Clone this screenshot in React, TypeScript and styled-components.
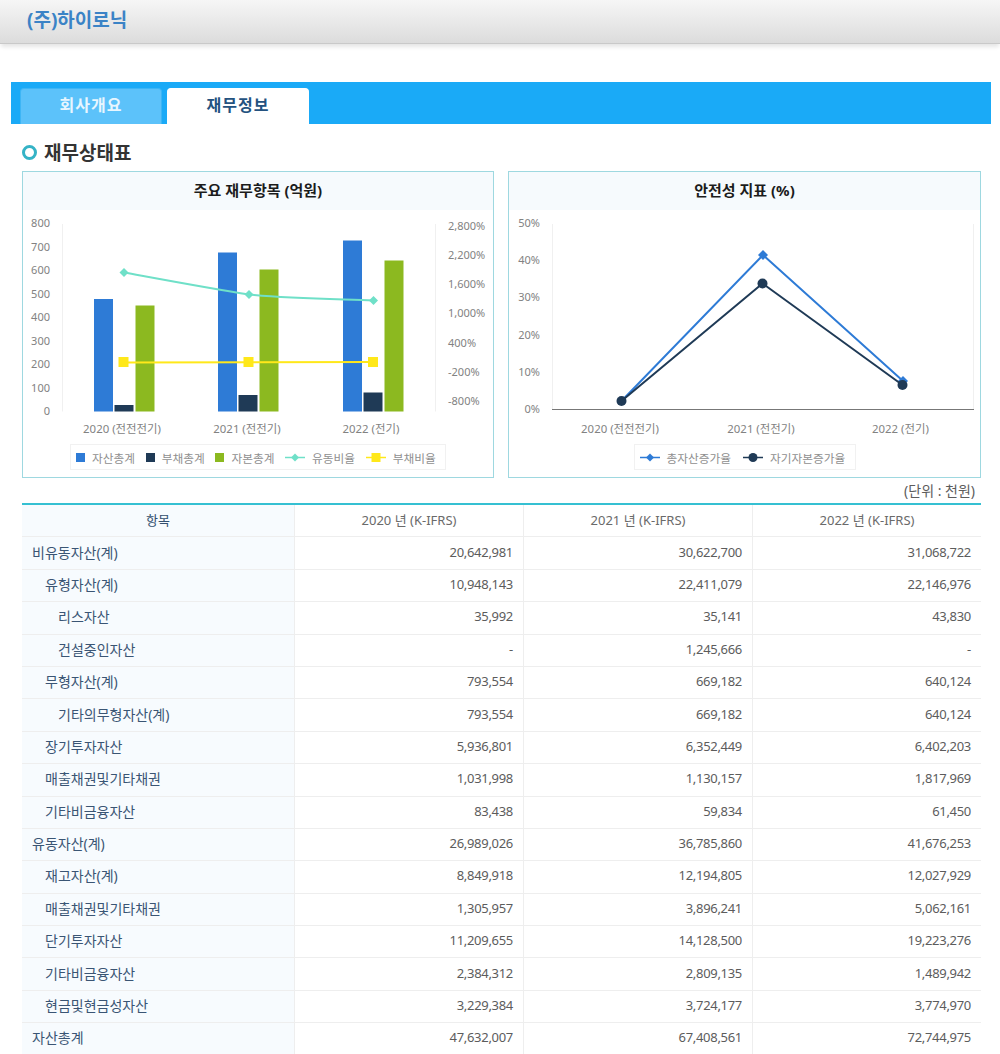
import React from 'react'
import styled, { createGlobalStyle } from 'styled-components'

const GlobalStyle = createGlobalStyle`
  html, body {
    margin: 0;
    padding: 0;
    background: #fff;
    font-family: "Noto Sans", "Noto Sans CJK KR", sans-serif;
  }
  * { box-sizing: border-box; }
`

const TopBar = styled.header`
  height: 44px;
  padding: 8px 0 0 27px;
  background: linear-gradient(#f6f6f6, #dcdcdc);
  border-bottom: 1px solid #c9c9c9;
  box-shadow: 0 4px 4px -1px #e6e6e6;
`

const Company = styled.h1`
  margin: 0;
  font-size: 19px;
  line-height: 24px;
  font-weight: 700;
  color: #3b83c6;
`

const TabBar = styled.nav`
  display: flex;
  gap: 5px;
  height: 42px;
  margin: 38px 9px 0 11px;
  padding: 6px 0 0 9px;
  background: #1aaaf7;
`

const Tab = styled.div<{ $active?: boolean }>`
  width: 142px;
  height: 36px;
  border-radius: 4px 4px 0 0;
  text-align: center;
  font-size: 16px;
  line-height: 32px;
  font-weight: 700;
  letter-spacing: 1px;
  color: ${(p) => (p.$active ? '#24527f' : '#e8f6ff')};
  background: ${(p) => (p.$active ? '#fff' : '#5cc2fa')};
  border: 1px solid ${(p) => (p.$active ? '#fff' : '#3db5f5')};
  border-bottom: 0;
`

const Content = styled.main`
  padding: 0 19px 0 22px;
`

const SectionTitle = styled.h2`
  display: flex;
  align-items: center;
  gap: 7px;
  height: 47px;
  margin: 0;
  padding-top: 9px;
  font-size: 19px;
  font-weight: 700;
  color: #333;
`

const Ring = styled.span`
  width: 15px;
  height: 15px;
  border: 3px solid #35b3c6;
  border-radius: 50%;
`

const Charts = styled.div`
  display: grid;
  grid-template-columns: 472px 473px;
  gap: 14px;
`

const Card = styled.section`
  height: 307px;
  border: 1px solid #9ed8e0;
`

const CardTitle = styled.h3`
  height: 38px;
  margin: 0;
  background: #f6fafd;
  text-align: center;
  font-size: 15px;
  line-height: 37px;
  font-weight: 700;
  color: #1c1c1c;
`

const Plot = styled.svg`
  display: block;
  width: 100%;
  height: 234px;
  font-family: "Noto Sans", "Noto Sans CJK KR", sans-serif;
  font-size: 11px;
  fill: #828282;
`

const AxisLabel = styled.text`
  font-size: 11.4px;
`

const Legend = styled.div<{ $width: number }>`
  display: flex;
  align-items: center;
  width: ${(p) => p.$width}px;
  height: 26px;
  margin: 0 auto;
  padding: 0 5px;
  border: 1px solid #f1f1f1;
`

const LegendItem = styled.span<{ $gap: number }>`
  display: flex;
  align-items: center;
  gap: 7px;
  margin-right: ${(p) => p.$gap}px;
  font-size: 11.7px;
  color: #8f8f8f;
`

const Unit = styled.div`
  height: 25px;
  padding: 3px 6px 0 0;
  text-align: right;
  font-size: 14px;
  line-height: 20px;
  color: #5c5c5c;
`

const Table = styled.table`
  width: 100%;
  border-collapse: separate;
  border-spacing: 0;
  table-layout: fixed;
  border-top: 2px solid #35c0d2;
  font-size: 13px;
`

const HeadCell = styled.th<{ $label?: boolean }>`
  height: 32.4px;
  padding: 0 0 3px;
  font-weight: 400;
  color: ${(p) => (p.$label ? '#33506f' : '#6a6a6a')};
  background: ${(p) => (p.$label ? '#f7fbfe' : '#fff')};
  border-bottom: 1px solid #eee;
  border-left: 1px solid #eee;
  &:first-child { border-left: 0; }
`

const LabelCell = styled.td<{ $level: number }>`
  height: 32.4px;
  padding: 0 0 3px ${(p) => 10 + p.$level * 13}px;
  font-size: 14px;
  color: #3a5574;
  background: #f7fbfe;
  border-bottom: 1px solid #eee;
`

const NumCell = styled.td`
  height: 32.4px;
  padding: 0 10px 3px 0;
  text-align: right;
  letter-spacing: -0.3px;
  color: #5c5c5c;
  border-bottom: 1px solid #eee;
  border-left: 1px solid #eee;
`

const rows: [number, string, string, string, string][] = [
  [0, '비유동자산(계)', '20,642,981', '30,622,700', '31,068,722'],
  [1, '유형자산(계)', '10,948,143', '22,411,079', '22,146,976'],
  [2, '리스자산', '35,992', '35,141', '43,830'],
  [2, '건설중인자산', '-', '1,245,666', '-'],
  [1, '무형자산(계)', '793,554', '669,182', '640,124'],
  [2, '기타의무형자산(계)', '793,554', '669,182', '640,124'],
  [1, '장기투자자산', '5,936,801', '6,352,449', '6,402,203'],
  [1, '매출채권및기타채권', '1,031,998', '1,130,157', '1,817,969'],
  [1, '기타비금융자산', '83,438', '59,834', '61,450'],
  [0, '유동자산(계)', '26,989,026', '36,785,860', '41,676,253'],
  [1, '재고자산(계)', '8,849,918', '12,194,805', '12,027,929'],
  [1, '매출채권및기타채권', '1,305,957', '3,896,241', '5,062,161'],
  [1, '단기투자자산', '11,209,655', '14,128,500', '19,223,276'],
  [1, '기타비금융자산', '2,384,312', '2,809,135', '1,489,942'],
  [1, '현금및현금성자산', '3,229,384', '3,724,177', '3,774,970'],
  [0, '자산총계', '47,632,007', '67,408,561', '72,744,975'],
]

// chart coordinates are relative to the plot svg
const BLUE = '#2e7bd6'
const NAVY = '#1f3a56'
const GREEN = '#8cb920'
const MINT = '#6fe0c8'
const YELLOW = '#ffe81a'
const BASE = 201.5

const bars = [
  { x: 71, tops: [89, 195, 95.5] },
  { x: 195, tops: [42.5, 185, 59.5] },
  { x: 320, tops: [30.5, 182.5, 50.5] },
]

const Diamond = ({ x, y, r, color }: { x: number; y: number; r: number; color: string }) => (
  <polygon points={`${x},${y - r} ${x + r},${y} ${x},${y + r} ${x - r},${y}`} fill={color} />
)

const SwatchSquare = ({ color }: { color: string }) => (
  <svg width="9" height="9"><rect width="9" height="9" fill={color} /></svg>
)

const SwatchLine = ({ color, mark }: { color: string; mark: 'diamond' | 'square' | 'circle' }) => (
  <svg width="20" height="11">
    <line x1="0" y1="5.5" x2="20" y2="5.5" stroke={color} strokeWidth="1.5" />
    {mark === 'diamond' && <Diamond x={10} y={5.5} r={4} color={color} />}
    {mark === 'square' && <rect x="5.5" y="1" width="9" height="9" fill={color} />}
    {mark === 'circle' && <circle cx="10" cy="5.5" r="4.5" fill={color} />}
  </svg>
)

const BalanceChart = () => (
  <Plot viewBox="0 0 470 234">
    <line x1="39.5" y1="14" x2="39.5" y2={BASE} stroke="#f0f0f0" />
    <line x1="412.5" y1="14" x2="412.5" y2={BASE} stroke="#f0f0f0" />
    {['800', '700', '600', '500', '400', '300', '200', '100', '0'].map((t, i) => (
      <text key={t} x="27" y={17 + i * 23.5} textAnchor="end">{t}</text>
    ))}
    {['2,800%', '2,200%', '1,600%', '1,000%', '400%', '-200%', '-800%'].map((t, i) => (
      <text key={t} x="425" y={19.5 + i * 29.3}>{t}</text>
    ))}
    {bars.map((b) => (
      <g key={b.x}>
        <rect x={b.x} y={b.tops[0]} width="19" height={BASE - b.tops[0]} fill={BLUE} />
        <rect x={b.x + 20.5} y={b.tops[1]} width="19" height={BASE - b.tops[1]} fill={NAVY} />
        <rect x={b.x + 41.5} y={b.tops[2]} width="19" height={BASE - b.tops[2]} fill={GREEN} />
      </g>
    ))}
    <path d="M101 62.5 C142 70 190 79 226 84.5 C265 88.5 310 89 350.5 90.5" fill="none" stroke={MINT} strokeWidth="2" />
    {[[101, 62.5], [226, 84.5], [350.5, 90.5]].map(([x, y]) => (
      <Diamond key={x} x={x} y={y} r={4.5} color={MINT} />
    ))}
    <line x1="100.5" y1="152.5" x2="350" y2="152" stroke={YELLOW} strokeWidth="2" />
    {[100.5, 225.5, 350].map((x) => (
      <rect key={x} x={x - 5} y="147" width="10" height="10" fill={YELLOW} />
    ))}
    {[['2020 (전전전기)', 99], ['2021 (전전기)', 224], ['2022 (전기)', 348]].map(([t, x]) => (
      <AxisLabel key={t} x={x} y="223" textAnchor="middle">{t}</AxisLabel>
    ))}
  </Plot>
)

const StabilityChart = () => (
  <Plot viewBox="0 0 471 234">
    <line x1="43.5" y1="14" x2="43.5" y2="199" stroke="#f0f0f0" />
    <line x1="464.5" y1="14" x2="464.5" y2="199" stroke="#f0f0f0" />
    <line x1="43" y1="199.5" x2="465" y2="199.5" stroke="#777" strokeWidth="1.2" />
    {['50%', '40%', '30%', '20%', '10%', '0%'].map((t, i) => (
      <text key={t} x="31" y={17 + i * 37.2} textAnchor="end">{t}</text>
    ))}
    <polyline points="112.5,191 254,45 394,171" fill="none" stroke={BLUE} strokeWidth="2" />
    <Diamond x={254} y={45} r={5} color={BLUE} />
    <Diamond x={394} y={171} r={5} color={BLUE} />
    <polyline points="112.5,191 253.5,73.5 393.5,175" fill="none" stroke={NAVY} strokeWidth="2" />
    {[[112.5, 191], [253.5, 73.5], [393.5, 175]].map(([x, y]) => (
      <circle key={x} cx={x} cy={y} r="5" fill={NAVY} />
    ))}
    {[['2020 (전전전기)', 111], ['2021 (전전기)', 252], ['2022 (전기)', 391.5]].map(([t, x]) => (
      <AxisLabel key={t} x={x} y="223" textAnchor="middle">{t}</AxisLabel>
    ))}
  </Plot>
)

export default function App() {
  return (
    <>
      <GlobalStyle />
      <TopBar>
        <Company>(주)하이로닉</Company>
      </TopBar>
      <TabBar>
        <Tab>회사개요</Tab>
        <Tab $active>재무정보</Tab>
      </TabBar>
      <Content>
        <SectionTitle>
          <Ring />
          재무상태표
        </SectionTitle>
        <Charts>
          <Card>
            <CardTitle>주요 재무항목 (억원)</CardTitle>
            <BalanceChart />
            <Legend $width={376}>
              <LegendItem $gap={10.7}><SwatchSquare color={BLUE} />자산총계</LegendItem>
              <LegendItem $gap={10.7}><SwatchSquare color={NAVY} />부채총계</LegendItem>
              <LegendItem $gap={10.7}><SwatchSquare color={GREEN} />자본총계</LegendItem>
              <LegendItem $gap={10.7}><SwatchLine color={MINT} mark="diamond" />유동비율</LegendItem>
              <LegendItem $gap={0}><SwatchLine color={YELLOW} mark="square" />부채비율</LegendItem>
            </Legend>
          </Card>
          <Card>
            <CardTitle>안전성 지표 (%)</CardTitle>
            <StabilityChart />
            <Legend $width={222}>
              <LegendItem $gap={12}><SwatchLine color={BLUE} mark="diamond" />총자산증가율</LegendItem>
              <LegendItem $gap={0}><SwatchLine color={NAVY} mark="circle" />자기자본증가율</LegendItem>
            </Legend>
          </Card>
        </Charts>
        <Unit>(단위 : 천원)</Unit>
        <Table>
          <colgroup>
            <col style={{ width: 272 }} />
            <col />
            <col />
            <col />
          </colgroup>
          <thead>
            <tr>
              <HeadCell $label>항목</HeadCell>
              <HeadCell>2020 년 (K-IFRS)</HeadCell>
              <HeadCell>2021 년 (K-IFRS)</HeadCell>
              <HeadCell>2022 년 (K-IFRS)</HeadCell>
            </tr>
          </thead>
          <tbody>
            {rows.map(([level, label, a, b, c], i) => (
              <tr key={i}>
                <LabelCell $level={level}>{label}</LabelCell>
                <NumCell>{a}</NumCell>
                <NumCell>{b}</NumCell>
                <NumCell>{c}</NumCell>
              </tr>
            ))}
          </tbody>
        </Table>
      </Content>
    </>
  )
}
